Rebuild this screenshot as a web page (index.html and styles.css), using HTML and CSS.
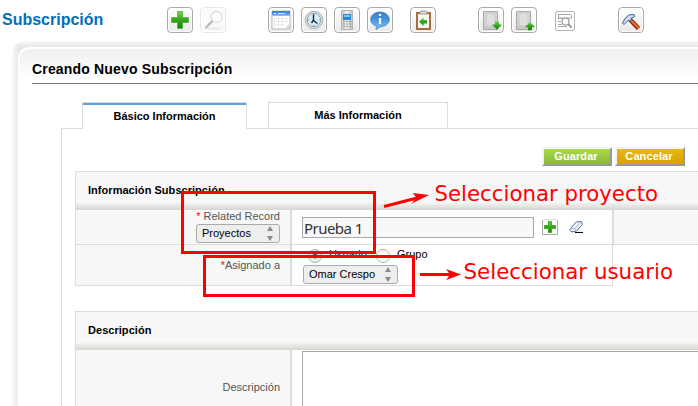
FILE: index.html
```html
<!DOCTYPE html>
<html lang="es">
<head>
<meta charset="utf-8">
<title>Subscripción</title>
<link rel="stylesheet" href="styles.css">
</head>
<body>
<svg width="0" height="0" class="defs">
  <defs>
    <linearGradient id="green" x2="0" y2="1"><stop stop-color="#72d643"/><stop offset=".5" stop-color="#35a51b"/><stop offset="1" stop-color="#148006"/></linearGradient>
    <linearGradient id="blue" x2="0" y2="1"><stop stop-color="#3c7fc8"/><stop offset=".5" stop-color="#4b98df"/><stop offset="1" stop-color="#8ccaf5"/></linearGradient>
    <linearGradient id="metal"><stop stop-color="#c5c5c5"/><stop offset=".5" stop-color="#efefef"/><stop offset="1" stop-color="#bababa"/></linearGradient>
  </defs>
</svg>
<header class="toolbar">
  <h1 class="module">Subscripción</h1>
  <div class="tools create">
    <span class="tool"><svg viewBox="0 0 26 26"><path d="M10.500 4.500h5v6h6v5h-6v6h-5v-6h-6v-5h6z" fill="url(#green)" stroke="#5aad42" stroke-width=".8"/></svg></span>
    <span class="tool faded"><svg viewBox="0 0 26 26"><ellipse cx="14" cy="21.500" rx="8" ry="1.500" fill="#ececec"/><circle cx="16.500" cy="10" r="5.500" fill="#fff" stroke="#ddd" stroke-width="1.300"/><path d="M12 14.500l-6 6" stroke="#bbb" stroke-width="2.300" stroke-linecap="round"/></svg></span>
  </div>
  <div class="tools views">
    <span class="tool"><svg viewBox="0 0 26 26"><path d="M4 4h18v18H4z" fill="#fff" stroke="#b9b9b9"/><path d="M4 4h18v5H4z" fill="url(#blue)"/><path d="M6 6.500h2m2 0h7" stroke="#cfe7fa"/><path d="M6 11.500h14M6 14.500h14M6 17.500h10M6.500 11v9m4-9v9m4-9v9m4-9v5" stroke="#e8e8e8"/><path d="M16 22c3 0 2-4 6-5v5z" fill="#d6d6d6"/></svg></span>
    <span class="tool"><svg viewBox="0 0 26 26"><circle cx="13" cy="13" r="8.800" fill="#ddd" stroke="#b2b2b2"/><circle cx="13" cy="13" r="6.700" fill="#d9effa" stroke="#85a2b1"/><path d="M13 7v1.500M13 17.500V19M7 13h1.500m9 0H19" stroke="#8fa9b6"/><path d="M12.500 7.500v6l4 3M12.500 13l-2 3" fill="none" stroke="#26333b" stroke-width="1.500"/></svg></span>
    <span class="tool"><svg viewBox="0 0 26 26"><path d="M7.500 3.500h11v19h-11z" fill="url(#metal)" stroke="#b4b4b4"/><path d="M9 7h8v6H9z" fill="#2987cf"/><path d="M10 8h6v2h-6z" fill="#7cc4f2"/><path d="M9 14.500h2m1 0h2m1 0h2M9 17h2m1 0h2m1 0h2M9 19.500h2m1 0h2m1 0h2" stroke="#949494"/></svg></span>
    <span class="tool"><svg viewBox="0 0 26 26"><path d="M13 5c5.300 0 9.300 3.300 9.300 7.500s-4 7-8.600 7.200L9 22.500l.5-3.300c-3.500-1-5.800-3.600-5.800-6.700C3.700 8.300 7.700 5 13 5z" fill="url(#blue)" stroke="#3478be" stroke-width=".7"/><path d="M13 7v2m0 2v6" stroke="#fff" stroke-width="2.200"/></svg></span>
  </div>
  <div class="tools clip">
    <span class="tool"><svg viewBox="0 0 26 26"><path d="M6 5h15v18H6z" fill="#a76e43"/><path d="M8 7h11v14H8z" fill="#f7f7f5"/><path d="M9 7l2-3h5l2 3z" fill="#ddd" stroke="#777" stroke-width=".7"/><path d="M9 14.500l4.500-4v2.500H17v3.500h-3.500V19z" fill="url(#green)"/></svg></span>
  </div>
  <div class="tools transfer">
    <span class="tool"><svg viewBox="0 0 26 26"><path d="M5.500 4.500h14v18h-14z" fill="#d4d4d4" stroke="#aaa"/><rect x="8" y="6" width="9" height="13" rx="3" fill="#dedede" stroke="#cacaca"/><path d="M6 19h13v3H6z" fill="#c8c8c8"/><path d="M17 14.500h4v3h3L19 22.800 14 17.500h3z" fill="url(#green)"/></svg></span>
    <span class="tool"><svg viewBox="0 0 26 26"><path d="M5.500 4.500h14v18h-14z" fill="#d4d4d4" stroke="#aaa"/><rect x="8" y="6" width="9" height="13" rx="3" fill="#dedede" stroke="#cacaca"/><path d="M6 19h13v3H6z" fill="#c8c8c8"/><path d="M17 23.300h4v-3h3L19 15l-5 5.300h3z" fill="url(#green)"/></svg></span>
  </div>
  <span class="finder"><svg viewBox="0 0 20 20"><path d="M3 3.500h13M3.500 3v4h13V4M3 7.500h4M3 10.500h3M3 13.500h4m-4 2h9" fill="none" stroke="#aaa"/><circle cx="10.500" cy="10.500" r="3.500" fill="#fff" stroke="#999" stroke-width="1.200"/><path d="M13 13l3.500 3.500" stroke="#999" stroke-width="2"/></svg></span>
  <span class="tool settings"><svg viewBox="0 0 26 26"><path d="M12 12.500l8.500 9" stroke="#7c2310" stroke-width="4.500"/><path d="M11.500 12l9 9" stroke="#f46a27" stroke-width="2.300"/><path d="M4.500 16L7 11.500l4-3.700 5-.3.700 2-3.200 1.500-1 3-2.500-.5-2 2-2 2z" fill="#c6ddf2" stroke="#48618c"/></svg></span>
</header>

<main class="shell">
  <div class="panel">
    <h2 class="title"><span>Creando Nuevo Subscripción</span></h2>
    <nav class="tabs">
      <div class="edge first"></div>
      <div class="tab active"><span>Básico Información</span></div>
      <div class="edge gap"></div>
      <div class="tab second"><span>Más Información</span></div>
      <div class="edge rest"></div>
    </nav>
    <div class="content">
      <div class="actions"><button class="save">Guardar</button><button class="cancel">Cancelar</button></div>
      <section class="block">
        <h3 class="heading">Información Subscripción</h3>
        <div class="row related">
          <div class="label"><div class="caption"><b>*</b> Related Record</div><div class="select projects"><span>Proyectos</span><i class="arrows"></i></div></div>
          <div class="value">
            <div class="input">Prueba 1</div>
            <svg class="add" viewBox="0 0 16 16"><path d="M.5 1v14.500h15V1" fill="#fafafa" stroke="#aaa"/><path d="M1 .5h14" stroke="#ddd"/><path d="M6.500 2.500h3v4h4v3h-4v4h-3v-4h-4v-3h4z" fill="url(#green)" stroke="#3caa20"/></svg>
            <svg class="eraser" viewBox="0 0 15 14"><path d="M.8 9.500L7 2l5.500-.5 1 3L7 11.500l-5 .3z" fill="#eef3fb" stroke="#596d92"/><path d="M1 9l5-.5 1 3M6 8.500l6.500-7" fill="none" stroke="#a5b6d3"/><path d="M6 12.500h8" stroke="#000"/></svg>
          </div>
          <div class="spare"></div>
        </div>
        <div class="row assigned">
          <div class="label"><div class="caption"><b>*</b>Asignado a</div></div>
          <div class="value">
            <div class="radios"><i class="radio on"></i><span class="user">Usuario</span><i class="radio"></i><span class="group">Grupo</span></div>
            <div class="select person"><span>Omar Crespo</span><i class="arrows"></i></div>
          </div>
        </div>
      </section>
      <section class="block description">
        <h3 class="heading">Descripción</h3>
        <div class="row">
          <div class="label"><div class="caption">Descripción</div></div>
          <div class="value"><div class="textarea"></div></div>
        </div>
      </section>
    </div>
  </div>
</main>
<svg class="notes" viewBox="0 0 698 406">
  <g fill="none" stroke="#f00" stroke-width="3">
    <path d="M182.500 192.500h192v60h-192z"/><path d="M204.500 256.500h209v39h-209z"/>
    <path d="M384 206.500L419 197.500M420 274.500h30"/>
  </g>
  <g fill="#f00"><path d="M429 195l-16-2 3.500 5L411 204zM461 274.500l-15-5.500 4 5.500-4 5.500z"/>
    <text x="434.500" y="201" textLength="223.500" lengthAdjust="spacingAndGlyphs">Seleccionar proyecto</text>
    <text x="463.500" y="279" textLength="209.500" lengthAdjust="spacingAndGlyphs">Seleccionar usuario</text>
  </g>
</svg>
</body>
</html>
```
FILE: styles.css
```css
* { box-sizing: border-box; }
body { margin: 0; width: 698px; height: 406px; overflow: hidden; position: relative; background: #fff; font: 11px/13px "Liberation Sans", Arial, sans-serif; color: #000; }
svg { display: block; }
.defs { position: absolute; }
.toolbar { height: 41px; display: flex; align-items: flex-start; padding-top: 7px; }
.module { width: 165px; margin: 3px 0 0 2px; font-size: 16px; line-height: 20px; color: #0070ba; }
.tools { display: flex; gap: 7px; }
.tool { width: 26px; height: 26px; flex: none; border: 1px solid #a9a9a9; border-radius: 4px; background: linear-gradient(#fff, #e9e9e9); box-shadow: inset 0 0 0 1px #fff; }
.tool svg { width: 26px; height: 26px; margin: -1px; }
.faded { border-color: #e8e8e8; background: #fafafa; }
.views { margin-left: 42px; }
.clip { margin-left: 17px; }
.transfer { margin-left: 42px; }
.finder { width: 20px; height: 20px; margin: 4px 0 0 18px; border: 1px solid #b5b5b5; border-radius: 2px; }
.finder svg { width: 20px; height: 20px; margin: -1px; }
.settings { margin-left: 43px; }
.shell { height: 380px; margin-left: 12px; padding: 6px 0 0 6px; border-radius: 14px 0 0 0; background: linear-gradient(90deg, #f9f9f9, #e9e9e9 6px, transparent 7px), linear-gradient(#f9f9f9, #e6e6e6 6px); }
.panel { height: 374px; border: solid #fff; border-width: 2px 0 0 2px; border-radius: 11px 0 0 0; background: linear-gradient(#f0f0f0, #fff 32px); padding-left: 12px; }
.title { height: 35px; margin: 0; padding-top: 11px; border-bottom: 1px solid #777; font-size: 14px; line-height: 18px; letter-spacing: .17px; }
.tabs { display: flex; height: 27px; margin: 18px 0 0 29px; }
.edge { border-bottom: 1px solid #dcdcdc; }
.first { width: 21px; }
.gap { width: 21px; }
.rest { flex: 1; }
.tab { border: 1px solid #dcdcdc; font-weight: bold; text-align: center; }
.active { width: 165px; border-bottom: 0; box-shadow: inset 0 2px #619fdf; padding-top: 7px; }
.second { width: 180px; padding-top: 6px; }
.content { margin-left: 29px; border-left: 1px solid #dcdcdc; padding: 18px 0 0 13px; }
.actions { display: flex; gap: 3px; margin-left: 467px; }
button { width: 70px; height: 19px; padding: 0 2px 0 0; border: 2px solid; border-color: #f4f4f4 #999 #999 #f4f4f4; font: bold 11px/13px "Liberation Sans", Arial, sans-serif; letter-spacing: .1px; color: #fff; }
.save { background: linear-gradient(#abd74a, #8abb35); }
.cancel { background: linear-gradient(#e8b817, #dca000); }
.block { margin-top: 5px; border: solid #dcdcdc; border-width: 1px 0 0 1px; }
.heading { height: 38px; margin: 0; padding: 12px 0 0 12px; font-size: 11px; line-height: 13px; letter-spacing: .04px; background: linear-gradient(#f3f3f1, #d5d6d0) bottom/100% 7px no-repeat #f7f7f7; }
.row { display: flex; }
.label { width: 216px; border-right: 2px solid #dcdcdc; background: #f7f7f7; padding-right: 10px; text-align: right; color: #555; }
.caption b { color: #f00; font-weight: normal; }
.related { height: 35px; border-bottom: 1px solid #dcdcdc; }
.related .value { width: 320px; display: flex; padding: 7px 0 0 10px; }
.select { display: flex; align-items: center; justify-content: space-between; height: 19px; border: 1px solid #aaa; border-radius: 3px; background: #eee; color: #000; padding: 0 6px 0 5px; }
.projects { width: 84px; margin: 1px 0 0 auto; }
.arrows { display: flex; flex-direction: column; gap: 5px; }
.arrows::before, .arrows::after { content: ""; border: 3px solid transparent; }
.arrows::before { border-top: 0; border-bottom: 5px solid #888; }
.arrows::after { border-bottom: 0; border-top: 5px solid #888; }
.input { width: 232px; height: 21px; border: 1px solid #aaa; background: #f8f8f8; padding-left: 1px; font: 15px/20px "Noto Sans", sans-serif; letter-spacing: -.55px; color: #333; }
.add { width: 16px; height: 16px; margin: 2px 0 0 8px; }
.eraser { width: 15px; height: 14px; margin: 3px 0 0 11px; }
.spare { flex: 1; border-left: 2px solid #dcdcdc; background: #f7f7f7; }
.assigned { height: 41px; width: 537px; border: solid #dcdcdc; border-width: 0 1px 1px 0; }
.assigned .caption { padding-top: 14px; }
.assigned .value { padding: 3px 0 0 11px; }
.radios { display: flex; height: 17px; padding-left: 5px; }
.radio { width: 14px; height: 14px; border: 1px solid #aaa; border-radius: 50%; margin-top: 1px; background: #fff; flex: none; }
.on { background: radial-gradient(circle, #555 0 2px, #eee 3px); }
.user { width: 47px; margin-left: 7px; }
.group { margin-left: 7px; }
.person { width: 95px; }
.description { margin-top: 25px; }
.description .row { height: 70px; }
.description .caption { padding-top: 31px; }
.description .value { flex: 1; padding: 1px 0 0 10px; }
.textarea { height: 70px; border: 1px solid #aaa; background: #fff; border-right: 0; }
.notes { position: absolute; inset: 0; width: 698px; height: 406px; font: 21px "DejaVu Sans", sans-serif; }
```
